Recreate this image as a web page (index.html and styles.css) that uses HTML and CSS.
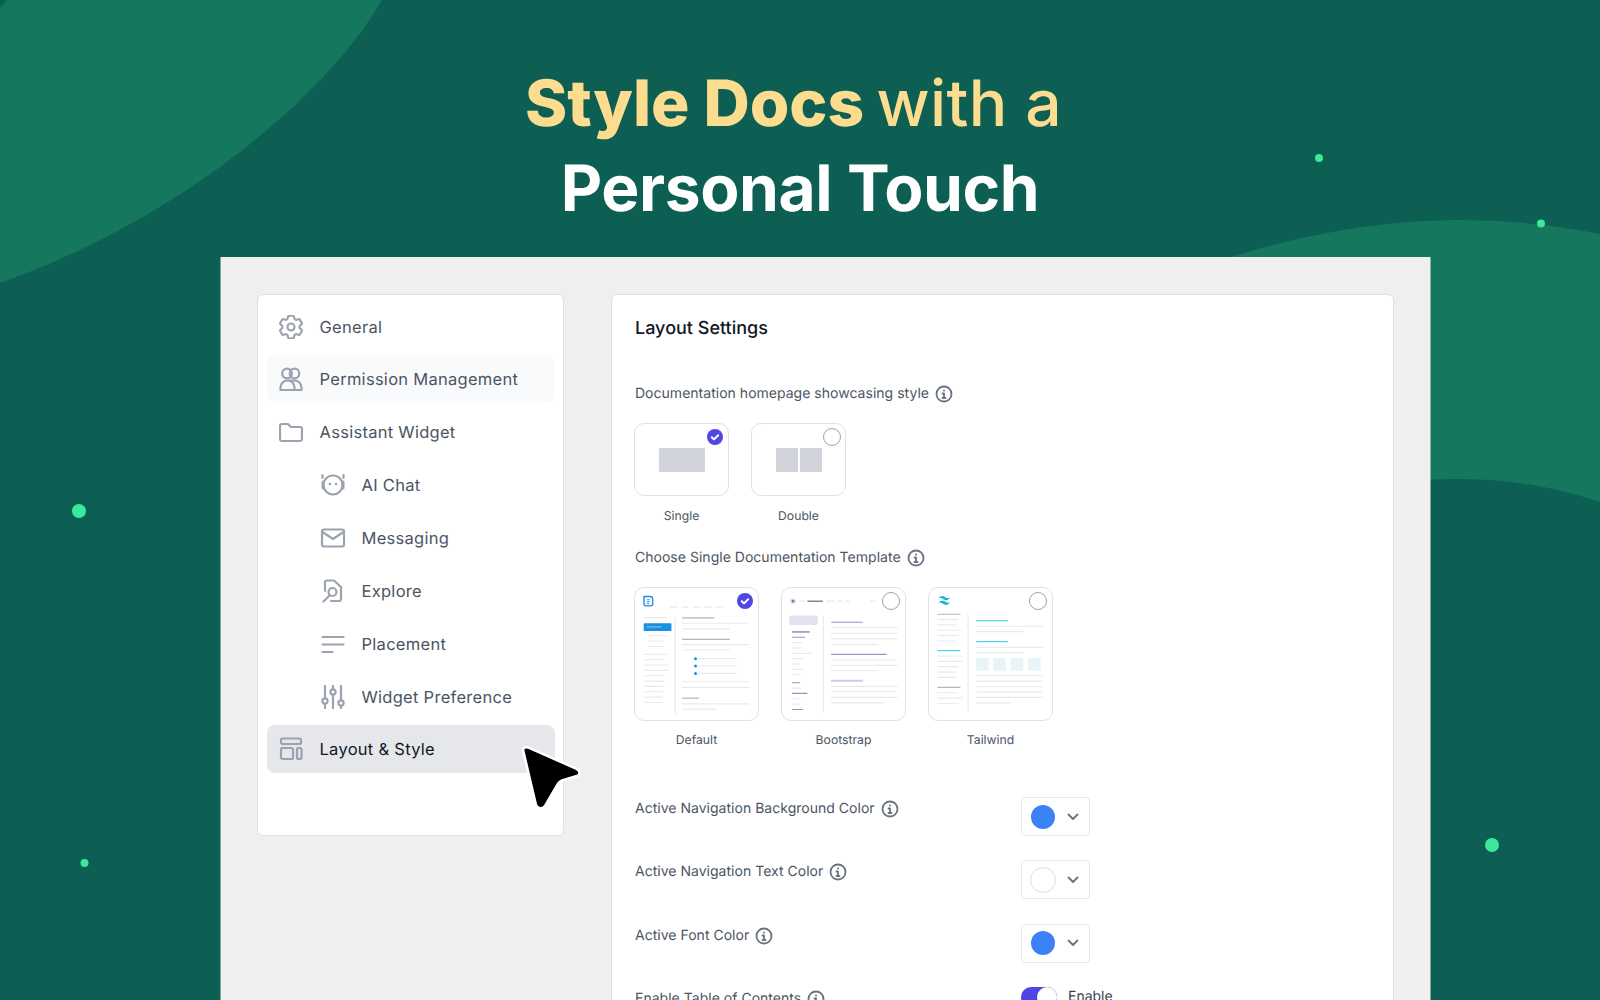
FILE: index.html
```html
<!DOCTYPE html>
<html lang="en">
<head>
<meta charset="utf-8">
<title>Style Docs with a Personal Touch</title>
<link rel="stylesheet" href="styles.css">
</head>
<body>
<div class="stage">
  <svg class="bg" viewBox="0 0 1600 1000" width="1600" height="1000" aria-hidden="true">
    <path class="blob" d="M7 0H382C330 90 190 215 0 283V8Z"/>
    <path class="blob" d="M1180 275C1270 240 1370 220 1457 220C1510 220 1555 225 1600 234V502C1555 487 1510 479 1457 479C1440 479 1420 480 1400 482V300Z"/>
    <circle class="dot" cx="79" cy="511" r="7"/>
    <circle class="dot" cx="84.500" cy="863" r="4"/>
    <circle class="dot" cx="1319" cy="158" r="4"/>
    <circle class="dot" cx="1541" cy="223.500" r="4"/>
    <circle class="dot" cx="1492" cy="845" r="7"/>
  </svg>

  <header class="hero">
    <h1 class="headline">
      <span class="line line-a"><span class="strong">Style Docs</span> with a</span>
      <span class="line line-b">Personal Touch</span>
    </h1>
  </header>

  <main class="panel">
    <nav class="side">
      <a class="item"><svg class="ico gear" viewBox="2.500 2.500 19 19"><path d="M9.594 3.940c.09-.542.56-.94 1.11-.94h2.593c.55 0 1.02.398 1.11.94l.213 1.281c.063.374.313.686.645.87.074.04.147.083.22.127.325.196.72.257 1.075.124l1.217-.456a1.125 1.125 0 0 1 1.37.49l1.296 2.247a1.125 1.125 0 0 1-.26 1.431l-1.003.827c-.293.241-.438.613-.43.992a7.723 7.723 0 0 1 0 .255c-.008.378.137.75.43.991l1.004.827c.424.35.534.955.26 1.43l-1.298 2.247a1.125 1.125 0 0 1-1.369.491l-1.217-.456c-.355-.133-.75-.072-1.076.124a6.470 6.470 0 0 1-.22.128c-.331.183-.581.495-.644.869l-.213 1.281c-.09.543-.56.94-1.11.94h-2.594c-.55 0-1.019-.398-1.11-.94l-.213-1.281c-.062-.374-.312-.686-.644-.87a6.520 6.520 0 0 1-.22-.127c-.325-.196-.72-.257-1.076-.124l-1.217.456a1.125 1.125 0 0 1-1.369-.49l-1.297-2.247a1.125 1.125 0 0 1 .26-1.431l1.004-.827c.292-.24.437-.613.43-.991a6.932 6.932 0 0 1 0-.255c.007-.38-.138-.751-.43-.992l-1.004-.827a1.125 1.125 0 0 1-.26-1.43l1.297-2.247a1.125 1.125 0 0 1 1.37-.491l1.216.456c.356.133.751.072 1.076-.124.072-.044.146-.086.22-.128.332-.183.582-.495.644-.869l.214-1.28Z"/><circle cx="12" cy="12" r="2.800"/></svg>General</a>
      <a class="item item-hover"><svg class="ico" viewBox="0 0 24 24"><circle cx="8" cy="6.500" r="4.800"/><circle cx="15.500" cy="6.500" r="4.800"/><path d="M1.500 23v-2.500a7 7 0 0 1 7-7 7 7 0 0 1 7 7V23M9 13.500h6.500a7 7 0 0 1 7 7V23M1.500 23h21"/></svg>Permission Management</a>
      <a class="item"><svg class="ico" viewBox="0 0 24 24"><path d="M1 6a2 2 0 0 1 2-2h6l3 3h9a2 2 0 0 1 2 2v10a2 2 0 0 1-2 2H3a2 2 0 0 1-2-2Z"/></svg>Assistant Widget</a>
      <a class="item sub"><svg class="ico ico-wide" viewBox="0 0 26 24"><circle cx="13" cy="12" r="9.500"/><path d="M3 9v6M23 9v6" class="thick"/><path d="M2.500 2v3M23.500 2v3"/><circle class="fill" cx="10" cy="11" r="1.300"/><circle class="fill" cx="16" cy="11" r="1.300"/></svg><span>AI Chat</span></a>
      <a class="item sub"><svg class="ico ico-wide" viewBox="0 0 26 24"><rect x="2" y="3.500" width="22" height="17" rx="2"/><path d="M2.500 6l10.500 7 10.500-7"/></svg><span>Messaging</span></a>
      <a class="item sub"><svg class="ico ico-wide" viewBox="0 0 26 24"><path d="M5 12V3.500A2 2 0 0 1 7 1.500h7l7 6.500v12a2 2 0 0 1-2 2h-8"/><circle cx="12.500" cy="13" r="4"/><path d="M9.500 16.500L3.500 22.500"/></svg><span>Explore</span></a>
      <a class="item sub"><svg class="ico ico-wide" viewBox="0 0 26 24"><path d="M2.500 5h21M2.500 12.500h21M2.500 20h10"/></svg><span>Placement</span></a>
      <a class="item sub"><svg class="ico ico-wide" viewBox="0 0 26 24"><path d="M5 1v12M5 19v4M13 1v3M13 10v13M21 1v14M21 21v2"/><circle cx="5" cy="16" r="2.600"/><circle cx="13" cy="7" r="2.600"/><circle cx="21" cy="18" r="2.600"/></svg><span>Widget Preference</span></a>
      <a class="item item-active"><svg class="ico" viewBox="0 0 24 24"><rect x="2" y="1.500" width="20" height="5.500" rx="1.500"/><rect x="2" y="11" width="12" height="11" rx="1.500"/><rect x="18" y="11" width="4.500" height="11" rx="1.500"/></svg>Layout &amp; Style</a>
    </nav>

    <section class="settings">
      <h2 class="title">Layout Settings</h2>

      <div class="label label-first">Documentation homepage showcasing style
        <svg class="info" viewBox="0 0 18 18"><circle cx="9" cy="9" r="7.500"/><path d="M7.500 8.500H9v4.500M7.500 13h3"/><circle class="info-dot" cx="9" cy="5.500" r="1"/></svg>
      </div>
      <div class="tiles">
        <figure class="choice">
          <div class="tile small">
            <svg class="mark" viewBox="0 0 16 16"><circle cx="8" cy="8" r="8" fill="#4f46e5"/><path d="M4.800 8.200l2.200 2.200 4.200-4.200" fill="none" stroke="#fff" stroke-width="2" stroke-linecap="round" stroke-linejoin="round"/></svg>
            <div class="blocks"><i class="block block-one"></i></div>
          </div>
          <figcaption>Single</figcaption>
        </figure>
        <figure class="choice">
          <div class="tile small">
            <i class="radio"></i>
            <div class="blocks"><i class="block"></i><i class="block"></i></div>
          </div>
          <figcaption>Double</figcaption>
        </figure>
      </div>

      <div class="label label-second">Choose Single Documentation Template
        <svg class="info" viewBox="0 0 18 18"><circle cx="9" cy="9" r="7.500"/><path d="M7.500 8.500H9v4.500M7.500 13h3"/><circle class="info-dot" cx="9" cy="5.500" r="1"/></svg>
      </div>
      <div class="tiles tiles-large">
        <figure class="choice">
          <div class="tile large">
            <svg class="thumb" viewBox="28 22 374 400">
              <path d="M58 50h18q8 0 8 8v14q0 6-6 6H64q-6 0-6-6Z" fill="none" stroke="#1a8fe0" stroke-width="4"/><path d="M67 60h8M67 66h8M67 72h6" stroke="#1a8fe0" stroke-width="3" fill="none"/>
              <path class="t-l" d="M135 82h23M170 82h22M204 82h22M238 82h22M272 82h22M57 113h70M70 167h57M70 183h48M70 199h44M57 223h70M57 239h61M57 255h75M57 271h75M57 287h63M57 303h63M57 319h57M57 335h57M57 351h57M57 367h57M172 130h200M172 147h143M172 194h200M172 210h143M220 236h115M220 258h115M220 280h115M172 305h200M172 322h200M172 371h200M172 387h104M151 113v289"/>
              <path class="t-d" d="M172 114h96M172 178h143M172 354h50"/>
              <rect x="57" y="130" width="83" height="23" rx="2" fill="#1a8fe0"/>
              <path d="M66 141h44" stroke="#8fcbf3" stroke-width="3"/>
              <circle cx="212" cy="236" r="4.500" fill="#1a8fe0"/><circle cx="212" cy="258" r="4.500" fill="#1a8fe0"/><circle cx="212" cy="280" r="4.500" fill="#1a8fe0"/>
            </svg>
            <svg class="mark mark-lg" viewBox="0 0 16 16"><circle cx="8" cy="8" r="8" fill="#4f46e5"/><path d="M4.800 8.200l2.200 2.200 4.200-4.200" fill="none" stroke="#fff" stroke-width="2" stroke-linecap="round" stroke-linejoin="round"/></svg>
          </div>
          <figcaption>Default</figcaption>
        </figure>
        <figure class="choice">
          <div class="tile large">
            <svg class="thumb" viewBox="18 22 374 400">
              <circle cx="54" cy="64" r="8" fill="#d9d3e8"/><circle cx="54" cy="64" r="3.500" fill="#7a6a96"/>
              <path class="t-l" d="M72 64h18M152 64h28M187 64h16M210 64h13M285 64h15M51 188h31M51 204h27M51 220h59M51 236h33M51 252h25M51 268h33M51 284h27M51 324h27M51 356h26M51 372h24M168 143h198M168 160h198M168 177h198M168 193h142M168 240h198M168 256h198M168 272h142M168 319h198M168 335h198M168 352h198M168 368h158M145 107v290"/>
              <path d="M97 64h46" stroke="#75588f" stroke-width="3.500"/>
              <rect x="43" y="107" width="85" height="28" rx="5" fill="#e4e1f0"/>
              <path d="M51 156h53" stroke="#a795bd" stroke-width="5"/>
              <path class="t-p" d="M51 172h39M51 308h24M51 340h46M51 388h33M168 127h95M168 223h166"/>
              <path d="M168 302h95" stroke="#d3c8e6" stroke-width="6"/>
            </svg>
            <i class="radio radio-lg"></i>
          </div>
          <figcaption>Bootstrap</figcaption>
        </figure>
        <figure class="choice">
          <div class="tile large">
            <svg class="thumb" viewBox="25 22 374 400">
              <path d="M54 58q6-11 17-9c6 1 8 6 13 6 3 0 6-1 8-5-6 11-11 13-18 10-5-2-8-6-12-6-3 0-6 1-8 4ZM54 72q6-11 17-9c6 1 8 6 13 6 3 0 6-1 8-5-6 11-11 13-18 10-5-2-8-6-12-6-3 0-6 1-8 4Z" fill="#17b5cf"/>
              <path class="t-l" d="M53 119h61M53 135h57M53 151h74M53 167h64M53 183h57M53 228h61M53 244h74M53 260h64M53 276h57M53 292h57M53 338h61M53 354h74M53 370h64M169 139h199M169 155h141M169 202h199M169 218h141M169 287h199M169 303h199M169 320h199M169 336h199M169 352h199M169 369h103M145 103v289"/>
              <path class="t-d" d="M53 103h69M53 322h69"/>
              <path class="t-c" d="M53 212h69M169 122h95M169 185h95"/>
              <rect x="169" y="234" width="38" height="38" rx="3" fill="#e9f3fa"/><rect x="220" y="234" width="38" height="38" rx="3" fill="#e9f3fa"/><rect x="272" y="234" width="38" height="38" rx="3" fill="#e9f3fa"/><rect x="324" y="234" width="38" height="38" rx="3" fill="#e9f3fa"/>
            </svg>
            <i class="radio radio-lg"></i>
          </div>
          <figcaption>Tailwind</figcaption>
        </figure>
      </div>

      <div class="fields">
        <div class="field">
          <div class="label">Active Navigation Background Color
            <svg class="info" viewBox="0 0 18 18"><circle cx="9" cy="9" r="7.500"/><path d="M7.500 8.500H9v4.500M7.500 13h3"/><circle class="info-dot" cx="9" cy="5.500" r="1"/></svg>
          </div>
          <div class="picker"><i class="swatch swatch-blue"></i><svg class="chev" viewBox="0 0 12 8"><path d="M1.500 1.500L6 6l4.500-4.500"/></svg></div>
        </div>
        <div class="field">
          <div class="label">Active Navigation Text Color
            <svg class="info" viewBox="0 0 18 18"><circle cx="9" cy="9" r="7.500"/><path d="M7.500 8.500H9v4.500M7.500 13h3"/><circle class="info-dot" cx="9" cy="5.500" r="1"/></svg>
          </div>
          <div class="picker"><i class="swatch swatch-white"></i><svg class="chev" viewBox="0 0 12 8"><path d="M1.500 1.500L6 6l4.500-4.500"/></svg></div>
        </div>
        <div class="field">
          <div class="label">Active Font Color
            <svg class="info" viewBox="0 0 18 18"><circle cx="9" cy="9" r="7.500"/><path d="M7.500 8.500H9v4.500M7.500 13h3"/><circle class="info-dot" cx="9" cy="5.500" r="1"/></svg>
          </div>
          <div class="picker"><i class="swatch swatch-blue"></i><svg class="chev" viewBox="0 0 12 8"><path d="M1.500 1.500L6 6l4.500-4.500"/></svg></div>
        </div>
        <div class="field">
          <div class="label">Enable Table of Contents
            <svg class="info" viewBox="0 0 18 18"><circle cx="9" cy="9" r="7.500"/><path d="M7.500 8.500H9v4.500M7.500 13h3"/><circle class="info-dot" cx="9" cy="5.500" r="1"/></svg>
          </div>
          <div class="toggle-wrap"><span class="toggle"><i class="knob"></i></span><span class="toggle-text">Enable</span></div>
        </div>
      </div>
    </section>
  </main>

  <svg class="cursor" viewBox="0 0 64 68" width="67" height="71" aria-hidden="true">
    <path d="M5 7C4 4 7 2 10 3.500L55.500 23.500C60 25.500 60 30 55.500 31L42 35Q39.500 36 38 38.500L26 59C23.500 63 18 62 17 58Z" fill="#000" stroke="#fff" stroke-width="2.500" stroke-linejoin="round"/>
  </svg>
</div>
</body>
</html>
```
FILE: styles.css
```css
* { box-sizing: border-box; }
html, body { margin: 0; padding: 0; }
body { font-family: Inter, "Liberation Sans", sans-serif; color: #4b5563; text-rendering: geometricPrecision; }
.stage { position: relative; width: 1600px; height: 1000px; overflow: hidden; background: #0e5f53; }
.bg { position: absolute; left: 0; top: 0; }
.blob { fill: #14775e; }
.dot { fill: #3ce99b; }

.hero { position: relative; height: 257px; display: flex; justify-content: center; padding-top: 62px; }
.headline { margin: 0; font-size: 64px; line-height: 84.500px; font-weight: 500; text-align: center; }
.line { display: block; }
.line-a { color: #fcdc8e; padding-right: 13px; letter-spacing: .4px; }
.line-b { color: #fff; font-weight: 700; letter-spacing: -.4px; }
.strong { font-weight: 800; letter-spacing: 0; margin-right: -5px; }

.panel { position: relative; margin-left: 221px; width: 1209px; height: 800px; background: #efefef; padding: 37px 36.500px 0 36px; display: flex; gap: 47px; align-items: flex-start; box-shadow: -1px 0 0 rgba(239,239,239,.5), 1px 0 0 rgba(239,239,239,.5); }

.side { width: 307px; height: 542px; flex: none; background: #fff; border: 1px solid #e0e0e0; border-radius: 6px; padding: 7.500px 8px 7.500px 9px; display: flex; flex-direction: column; gap: 4.860px; }
.item { height: 48px; display: flex; align-items: center; padding-left: 12px; gap: 16.500px; border-radius: 8px; font-size: 16.500px; letter-spacing: .28px; font-weight: 400; color: #4b5563; white-space: nowrap; }
.item-hover { background: #f9fafb; }
.item-active { background: #e5e7eb; color: #111827; }
.sub { padding-left: 53px; gap: 15.500px; }
.ico { width: 24px; height: 24px; flex: none; fill: none; stroke: #9ca3af; stroke-width: 2.200; stroke-linecap: round; stroke-linejoin: round; }
.gear { stroke-width: 1.700; }
.ico-wide { width: 26px; }
.ico .fill { fill: #9ca3af; stroke: none; }
.ico .thick { stroke-width: 3; }

.settings { flex: 1; height: 760px; background: #fff; border: 1px solid #e0e0e0; border-radius: 6px; padding: 23px 23px 0 23px; }
.title { margin: 0; font-size: 18px; line-height: 22px; font-weight: 500; color: #111827; }

.label { display: flex; align-items: center; gap: 6px; font-size: 14px; line-height: 18px; letter-spacing: .02px; color: #4b5563; white-space: nowrap; }
.label-first { margin-top: 45px; }
.label-second { margin-top: 24.500px; }
.info { width: 18px; height: 18px; flex: none; fill: none; stroke: #6b7280; stroke-width: 1.800; stroke-linecap: round; stroke-linejoin: round; }
.info-dot { fill: #6b7280; stroke: none; }

.tiles { display: flex; gap: 22px; margin-top: 20px; margin-left: -1px; }
.tiles-large { margin-top: 20.500px; }
.choice { margin: 0; display: flex; flex-direction: column; align-items: center; }
.choice figcaption { font-size: 12.200px; line-height: 16px; margin-top: 12px; color: #4b5563; }
.tiles-large .choice figcaption { margin-top: 11px; }
.tile { position: relative; background: #fff; border: 1px solid #e0e1e5; border-radius: 10px; }
.small { width: 95px; height: 73px; display: flex; align-items: center; justify-content: center; }
.large { width: 125px; height: 134px; }
.blocks { display: flex; gap: 2px; }
.block { display: block; width: 22px; height: 24px; background: #d1d5db; border-radius: 1px; }
.block-one { width: 46px; }
.mark { position: absolute; right: 5px; top: 5px; width: 16px; height: 16px; }
.mark-lg { right: 5px; top: 5px; width: 16px; height: 16px; }
.radio { position: absolute; right: 4px; top: 4px; width: 18px; height: 18px; border: 1px solid #9ca3af; border-radius: 50%; background: #fff; }
.radio-lg { right: 5px; top: 4px; }
.thumb { position: absolute; left: -1px; top: -1px; width: 125px; height: 134px; }
.t-l { fill: none; stroke: #e9eaf0; stroke-width: 3.500; }
.t-d { fill: none; stroke: #b3b6ba; stroke-width: 3.500; }
.t-p { fill: none; stroke: #a98ccb; stroke-width: 3.500; }
.t-c { fill: none; stroke: #4fd3ee; stroke-width: 4; }

.fields { margin-top: 49px; display: flex; flex-direction: column; gap: 24.300px; }
.field { display: grid; grid-template-columns: 386px auto; justify-content: start; align-items: start; min-height: 39px; }
.field .label { margin-top: 3px; }
.picker { width: 69px; height: 39px; background: #fff; border: 1px solid #e5e7eb; border-radius: 4px; display: flex; align-items: center; padding-left: 9px; gap: 12px; }
.swatch { width: 24px; height: 24px; border-radius: 50%; display: block; flex: none; }
.swatch-blue { background: #3b82f6; }
.swatch-white { width: 26px; height: 26px; margin: 0 -1px; background: #fff; border: 1px solid #dcdfe4; }
.chev { width: 12px; height: 8px; fill: none; stroke: #6b7280; stroke-width: 1.800; stroke-linecap: round; stroke-linejoin: round; }
.toggle-wrap { display: flex; align-items: center; gap: 11px; }
.toggle { position: relative; display: block; width: 36px; height: 20px; border-radius: 10px; background: #4f46e5; }
.knob { position: absolute; right: 0; top: 0; width: 20px; height: 20px; border-radius: 50%; background: #fff; box-shadow: 0 0 1px rgba(0,0,0,.35); }
.toggle-text { font-size: 14px; color: #374151; }

.cursor { position: absolute; left: 517.500px; top: 743.500px; }
```
